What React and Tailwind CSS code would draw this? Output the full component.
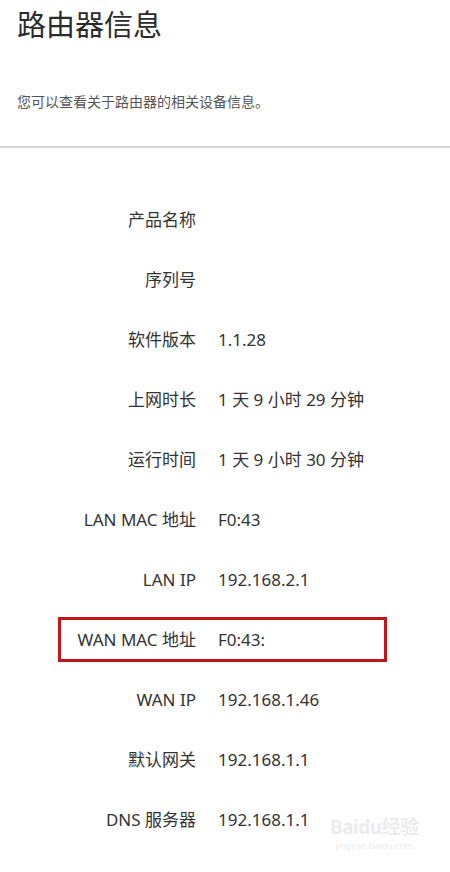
export default function App() {
  const rows = [
    ["产品名称", ""],
    ["序列号", ""],
    ["软件版本", "1.1.28"],
    ["上网时长", "1 天 9 小时 29 分钟"],
    ["运行时间", "1 天 9 小时 30 分钟"],
    ["LAN MAC 地址", "F0:43"],
    ["LAN IP", "192.168.2.1"],
    ["WAN MAC 地址", "F0:43:", true],
    ["WAN IP", "192.168.1.46"],
    ["默认网关", "192.168.1.1"],
    ["DNS 服务器", "192.168.1.1"],
  ];

  return (
    <div
      className="relative w-[450px] h-[872px] bg-white overflow-hidden text-[#333]"
      style={{ fontFamily: '"Noto Sans", "Noto Sans CJK SC", sans-serif' }}
    >
      {/* Header */}
      <div className="px-[17px] pt-[4px]">
        <h1 className="text-[29px] leading-[42px] font-normal text-[#2b2b2b]">路由器信息</h1>
        <p className="mt-[46px] text-[14px] leading-[20px] text-[#555]">
          您可以查看关于路由器的相关设备信息。
        </p>
      </div>
      <div className="mt-[34px] h-[2px] bg-[#d6d6d6]" />

      {/* Info rows */}
      <div className="mt-[42px] flex flex-col">
        {rows.map(([label, value, marked]) => (
          <div key={label} className="relative flex items-center h-[60px] text-[17px]">
            <div className="w-[196px] text-right text-[#333]">{label}</div>
            <div className="ml-[22px] text-[#333]">{value}</div>
            {marked && (
              <div className="absolute left-[58px] top-[7px] w-[329px] h-[45px] border-[3px] border-[#c3161c]" />
            )}
          </div>
        ))}
      </div>

      {/* Watermark */}
      <div className="absolute left-[330px] top-[816px] flex flex-col items-center gap-[3px] text-[#ececec]">
        <div className="text-[19px] leading-[22px] font-bold tracking-tight">Baidu经验</div>
        <div className="text-[9px] leading-[10px]">jingyan.baidu.com</div>
      </div>
    </div>
  );
}
